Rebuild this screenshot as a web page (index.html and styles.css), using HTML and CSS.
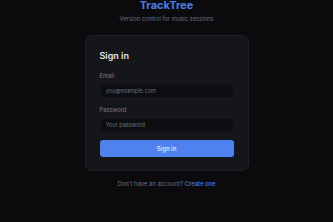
FILE: index.html
```html
<!DOCTYPE html>
<html lang="en">
<head>
    <meta charset="UTF-8">
    <meta name="viewport" content="width=device-width, initial-scale=1.0">
    <title>TrackTree - Sign in</title>
    <link rel="stylesheet" href="styles.css">
</head>
<body>
    <main class="auth">
        <header class="brand">
            <h1>TrackTree</h1>
            <p class="tagline">Version control for music sessions</p>
        </header>
        <form class="card">
            <h2>Sign in</h2>
            <label class="field">
                <span>Email</span>
                <input type="email" placeholder="you@example.com">
            </label>
            <label class="field">
                <span>Password</span>
                <input type="password" placeholder="Your password">
            </label>
            <button type="submit" class="btn-primary">Sign in</button>
        </form>
        <p class="switch">Don't have an account? <a href="#">Create one</a></p>
    </main>
</body>
</html>
```

FILE: styles.css
```css
* {
  margin: 0;
  padding: 0;
  box-sizing: border-box;
}

body {
  font-family: Inter, "Liberation Sans", sans-serif;
  background-color: #0b0b0e;
  color: #e4e6eb;
  height: 100vh;
  overflow: hidden;
}

.auth {
  display: flex;
  flex-direction: column;
  align-items: center;
}

/* Brand */
.brand {
  text-align: center;
}

.brand h1 {
  font-size: 11px;
  font-weight: 700;
  color: #4a7de9;
  line-height: 11px;
}

.tagline {
  font-size: 5.8px;
  color: #6a6f7c;
  margin-top: 4px;
  line-height: 8px;
}

/* Card */
.card {
  width: 164px;
  margin-top: 12px;
  background-color: #151619;
  border: 1px solid #1f2024;
  border-radius: 7px;
  padding: 14px 14px 13px;
  display: flex;
  flex-direction: column;
}

.card h2 {
  font-size: 9px;
  font-weight: 600;
  color: #e6e7ea;
  line-height: 12px;
  margin-bottom: 10px;
}

.field {
  display: flex;
  flex-direction: column;
  margin-bottom: 8px;
}

.field span {
  font-size: 5.8px;
  color: #777c8a;
  line-height: 8px;
  margin-bottom: 4px;
}

.field input {
  height: 14px;
  background-color: #0d0e11;
  border: 1px solid #131418;
  border-radius: 3px;
  padding: 0 5px;
  font-family: inherit;
  font-size: 5.6px;
  color: #e4e6eb;
  outline: none;
}

.field input::placeholder {
  color: #6b6f7b;
}

.btn-primary {
  height: 17px;
  background-color: #4f82ee;
  border: none;
  border-radius: 3px;
  font-family: inherit;
  font-size: 6px;
  font-weight: 600;
  color: #d9e3fb;
  cursor: pointer;
}

/* Footer link */
.switch {
  margin-top: 9px;
  font-size: 5.9px;
  color: #6a6f7c;
}

.switch a {
  color: #4a7de9;
  font-weight: 500;
  text-decoration: none;
}
```
